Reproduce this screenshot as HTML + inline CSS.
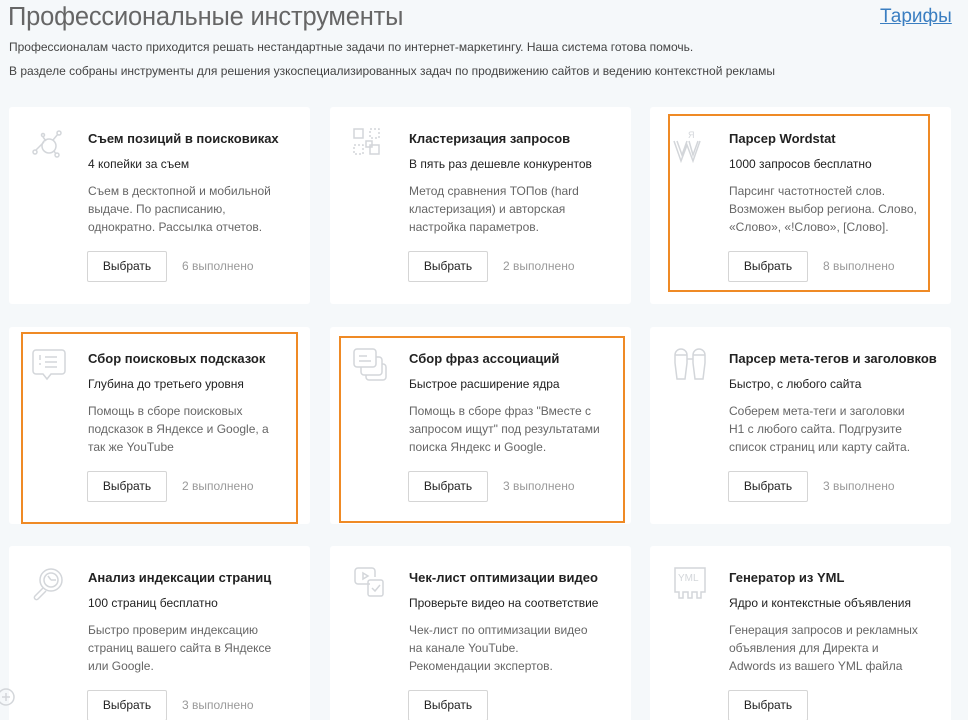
<!DOCTYPE html>
<html><head><meta charset="utf-8"><style>
*{margin:0;padding:0;box-sizing:border-box}
html,body{width:968px;height:720px;overflow:hidden}
body{background:#f5f8fa;font-family:"Liberation Sans","Noto Sans CJK SC",sans-serif;position:relative;color:#333}
h1{position:absolute;left:8px;top:3px;font-size:25.5px;font-weight:300;color:#666;letter-spacing:-0.2px}
.tar{position:absolute;left:880px;top:6px;font-size:19px;color:#3a7ec1;text-decoration:underline}
.p{position:absolute;left:9px;font-size:12px;color:#444}
.card{position:absolute;width:301px;height:197px;background:#fff;border-radius:3px}
.ico{position:absolute;left:22px;top:20px;width:36px;height:36px}
.t{position:absolute;left:79px;top:24px;font-size:13px;font-weight:bold;color:#222;white-space:nowrap}
.s{position:absolute;left:79px;top:50px;font-size:12px;color:#222;white-space:nowrap}
.d{position:absolute;left:79px;top:75px;font-size:12px;line-height:18px;color:#666;white-space:nowrap}
.b{position:absolute;left:78px;top:144px;width:80px;height:31px;border:1px solid #d5d5d5;border-radius:2px;font-size:12px;text-align:center;line-height:29px;color:#222;background:#fff}
.c{position:absolute;left:173px;top:152px;font-size:12px;color:#999;white-space:nowrap}
.ob{position:absolute;border:2px solid #ef8a25}
svg{fill:none;stroke:#d3d6da;stroke-width:1.5}
</style></head><body>
<h1>Профессиональные инструменты</h1>
<a class="tar">Тарифы</a>
<div class="p" style="top:40px">Профессионалам часто приходится решать нестандартные задачи по интернет-маркетингу. Наша система готова помочь.</div>
<div class="p" style="top:64px">В разделе собраны инструменты для решения узкоспециализированных задач по продвижению сайтов и ведению контекстной рекламы</div>

<div class="card" style="left:9px;top:107px">
<svg class="ico" viewBox="0 0 36 36"><circle cx="18" cy="19" r="7"/><circle cx="28" cy="6" r="2"/><circle cx="4" cy="25" r="2"/><circle cx="26" cy="28" r="2"/><circle cx="12" cy="8" r="1.5"/><path d="M22 13l5-6M5 23l8-8M12 10l3 4M23 24l2 3"/></svg>
<div class="t">Съем позиций в поисковиках</div><div class="s">4 копейки за съем</div>
<div class="d">Съем в десктопной и мобильной<br>выдаче. По расписанию,<br>однократно. Рассылка отчетов.</div>
<div class="b">Выбрать</div><div class="c">6 выполнено</div></div>

<div class="card" style="left:330px;top:107px">
<svg class="ico" viewBox="0 0 36 36"><rect x="2" y="2" width="9" height="9"/><rect x="18" y="2" width="9" height="9" stroke-dasharray="2 2"/><rect x="2" y="18" width="9" height="9" stroke-dasharray="2 2"/><rect x="18" y="18" width="9" height="9"/><rect x="14" y="14" width="6" height="6"/></svg>
<div class="t">Кластеризация запросов</div><div class="s">В пять раз дешевле конкурентов</div>
<div class="d">Метод сравнения ТОПов (hard<br>кластеризация) и авторская<br>настройка параметров.</div>
<div class="b">Выбрать</div><div class="c">2 выполнено</div></div>

<div class="card" style="left:650px;top:107px">
<svg class="ico" viewBox="0 0 36 36"><path d="M2 14l7 20 6-16 6 16 7-20M5 14l5 14 5-14M17 14l4 14 5-14"/><text x="16" y="11" font-size="9" fill="#d3d6da" stroke="none" font-family="Liberation Sans">Я</text></svg>
<div class="t">Парсер Wordstat</div><div class="s">1000 запросов бесплатно</div>
<div class="d">Парсинг частотностей слов.<br>Возможен выбор региона. Слово,<br>«Слово», «!Слово», [Слово].</div>
<div class="b">Выбрать</div><div class="c">8 выполнено</div></div>
<div class="ob" style="left:668px;top:114px;width:262px;height:178px"></div>

<div class="card" style="left:9px;top:327px">
<svg class="ico" viewBox="0 0 36 36"><path d="M5 3h26a3 3 0 0 1 3 3v18a3 3 0 0 1-3 3H20l-4 5-4-5H5a3 3 0 0 1-3-3V6a3 3 0 0 1 3-3z"/><path d="M9 8v5M9 16v2M14 10h12M14 15h12M14 20h12"/></svg>
<div class="t">Сбор поисковых подсказок</div><div class="s">Глубина до третьего уровня</div>
<div class="d">Помощь в сборе поисковых<br>подсказок в Яндексе и Google, а<br>так же YouTube</div>
<div class="b">Выбрать</div><div class="c">2 выполнено</div></div>
<div class="ob" style="left:21px;top:332px;width:277px;height:192px"></div>

<div class="card" style="left:330px;top:327px">
<svg class="ico" viewBox="0 0 36 36"><rect x="2" y="2" width="22" height="18" rx="3"/><path d="M7 9h8M7 14h12M24 10h3a3 3 0 0 1 3 3v12a3 3 0 0 1-3 3H12a3 3 0 0 1-3-3v-5M30 17h1a3 3 0 0 1 3 3v10a3 3 0 0 1-3 3H17a3 3 0 0 1-3-3v-2"/></svg>
<div class="t">Сбор фраз ассоциаций</div><div class="s">Быстрое расширение ядра</div>
<div class="d">Помощь в сборе фраз "Вместе с<br>запросом ищут" под результатами<br>поиска Яндекс и Google.</div>
<div class="b">Выбрать</div><div class="c">3 выполнено</div></div>
<div class="ob" style="left:339px;top:336px;width:286px;height:187px"></div>

<div class="card" style="left:650px;top:327px">
<svg class="ico" viewBox="0 0 36 36"><path d="M3 8a6 6 0 0 1 12 0v8l-2 16H5L3 16zM21 8a6 6 0 0 1 12 0v8l-2 16h-8l-2-16zM15 12h6M3 8h12M21 8h12"/></svg>
<div class="t">Парсер мета-тегов и заголовков</div><div class="s">Быстро, с любого сайта</div>
<div class="d">Соберем мета-теги и заголовки<br>H1 с любого сайта. Подгрузите<br>список страниц или карту сайта.</div>
<div class="b">Выбрать</div><div class="c">3 выполнено</div></div>

<div class="card" style="left:9px;top:546px">
<svg class="ico" viewBox="0 0 36 36"><circle cx="20" cy="14" r="11"/><circle cx="20" cy="14" r="7"/><path d="M20 14l-3-4M20 14h5M12 22l-8 8a2 2 0 0 0 3 3l8-8"/></svg>
<div class="t">Анализ индексации страниц</div><div class="s">100 страниц бесплатно</div>
<div class="d">Быстро проверим индексацию<br>страниц вашего сайта в Яндексе<br>или Google.</div>
<div class="b">Выбрать</div><div class="c">3 выполнено</div></div>

<div class="card" style="left:330px;top:546px">
<svg class="ico" viewBox="0 0 36 36"><path d="M18 18H6a3 3 0 0 1-3-3V5a3 3 0 0 1 3-3h14a3 3 0 0 1 3 3v6"/><path d="M11 7l5 3-5 3z"/><rect x="16" y="14" width="15" height="16" rx="2"/><path d="M20 22l3 3 5-6"/></svg>
<div class="t">Чек-лист оптимизации видео</div><div class="s">Проверьте видео на соответствие</div>
<div class="d">Чек-лист по оптимизации видео<br>на канале YouTube.<br>Рекомендации экспертов.</div>
<div class="b">Выбрать</div></div>

<div class="card" style="left:650px;top:546px">
<svg class="ico" viewBox="0 0 36 36"><path d="M3 2h30v24h-4v6h-4v-6h-5v6h-4v-6h-5v6H7v-6H3z"/><text x="6" y="15" font-size="10" fill="#d3d6da" stroke="none" font-family="Liberation Sans">YML</text></svg>
<div class="t">Генератор из YML</div><div class="s">Ядро и контекстные объявления</div>
<div class="d">Генерация запросов и рекламных<br>объявления для Директа и<br>Adwords из вашего YML файла</div>
<div class="b">Выбрать</div></div>

<svg style="position:absolute;left:-4px;top:684px;width:22px;height:26px" viewBox="0 0 22 26"><circle cx="10" cy="13" r="8"/><path d="M6 13h8M10 9v8"/></svg>
</body></html>
